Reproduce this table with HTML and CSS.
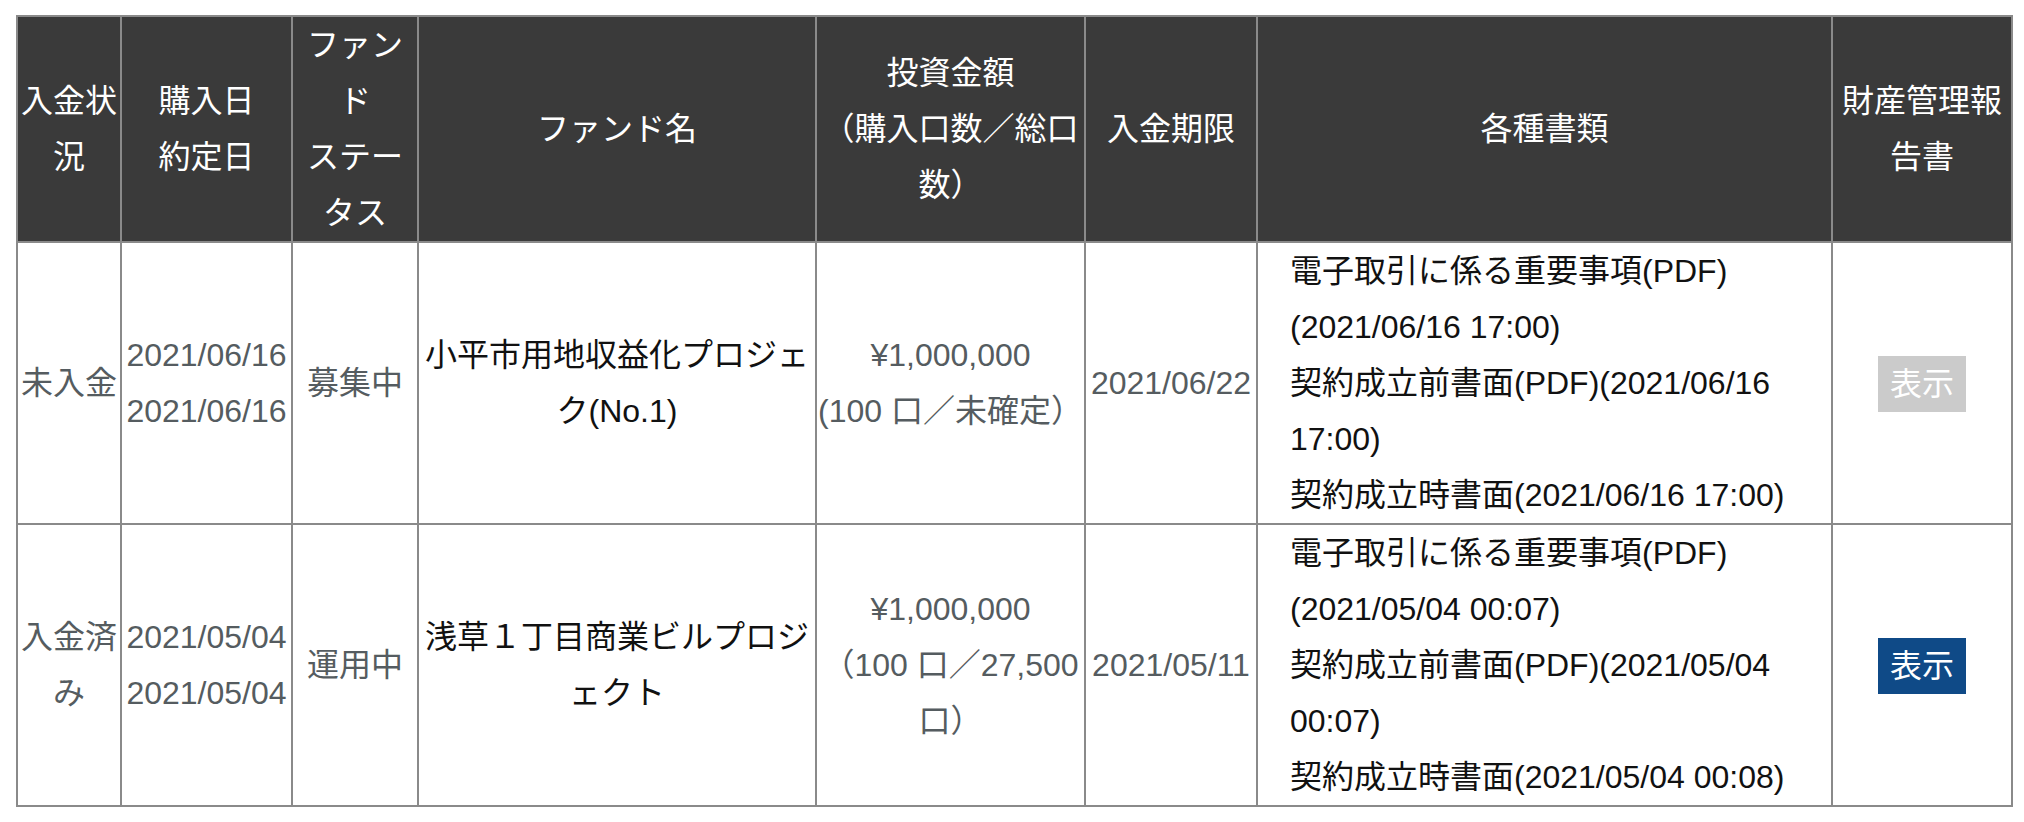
FILE: index.html
```html
<!DOCTYPE html>
<html lang="ja">
<head>
<meta charset="utf-8">
<title>購入履歴</title>
<link rel="stylesheet" href="styles.css">
</head>
<body>
<table class="history">
  <colgroup>
    <col class="c-status">
    <col class="c-date">
    <col class="c-fstatus">
    <col class="c-name">
    <col class="c-amount">
    <col class="c-limit">
    <col class="c-docs">
    <col class="c-report">
  </colgroup>
  <thead>
    <tr>
      <th>入金状況</th>
      <th>購入日<br>約定日</th>
      <th>ファンド<br>ステータス</th>
      <th>ファンド名</th>
      <th>投資金額<br>（購入口数／総口数）</th>
      <th>入金期限</th>
      <th>各種書類</th>
      <th>財産管理報告書</th>
    </tr>
  </thead>
  <tbody>
    <tr>
      <td class="muted">未入金</td>
      <td class="muted">2021/06/16<br>2021/06/16</td>
      <td class="muted">募集中</td>
      <td class="name">小平市用地収益化プロジェク(No.1)</td>
      <td class="muted">¥1,000,000<br>(100 口／未確定）</td>
      <td class="muted">2021/06/22</td>
      <td class="docs">
        <div class="doc">電子取引に係る重要事項(PDF)(2021/06/16 17:00)</div>
        <div class="doc">契約成立前書面(PDF)(2021/06/16 17:00)</div>
        <div class="doc">契約成立時書面(2021/06/16 17:00)</div>
      </td>
      <td><span class="btn btn-disabled">表示</span></td>
    </tr>
    <tr>
      <td class="muted">入金済み</td>
      <td class="muted">2021/05/04<br>2021/05/04</td>
      <td class="muted">運用中</td>
      <td class="name">浅草１丁目商業ビルプロジェクト</td>
      <td class="muted">¥1,000,000<br>（100 口／27,500 口）</td>
      <td class="muted">2021/05/11</td>
      <td class="docs">
        <div class="doc">電子取引に係る重要事項(PDF)(2021/05/04 00:07)</div>
        <div class="doc">契約成立前書面(PDF)(2021/05/04 00:07)</div>
        <div class="doc">契約成立時書面(2021/05/04 00:08)</div>
      </td>
      <td><span class="btn btn-active">表示</span></td>
    </tr>
  </tbody>
</table>
</body>
</html>
```
FILE: styles.css
```css
html, body {
  margin: 0;
  background: #ffffff;
}

body {
  padding: 15px 0 0 16px;
  font-family: "Liberation Sans", "Noto Sans CJK JP", sans-serif;
  font-size: 32px;
  line-height: 56px;
  color: #111111;
}

.history {
  table-layout: fixed;
  width: 1995px;
  border-collapse: collapse;
}

.c-status { width: 104px; }
.c-date { width: 171px; }
.c-fstatus { width: 126px; }
.c-name { width: 398px; }
.c-amount { width: 269px; }
.c-limit { width: 172px; }
.c-docs { width: 575px; }
.c-report { width: 180px; }

.history th,
.history td {
  border: 2px solid #8a8a8a;
  padding: 0;
  text-align: center;
  vertical-align: middle;
  font-weight: normal;
}

.history th {
  background: #3a3a3a;
  color: #ffffff;
}

.history td.muted {
  color: #555c60;
}

.history td.name {
  color: #111111;
}

.history td.docs {
  text-align: left;
  padding-left: 32px;
}

.btn {
  display: inline-block;
  padding: 0 12px;
  line-height: 56px;
  color: #ffffff;
  vertical-align: middle;
}

.btn-disabled {
  background: #cbcbcb;
}

.btn-active {
  background: #0f4a87;
}
```
